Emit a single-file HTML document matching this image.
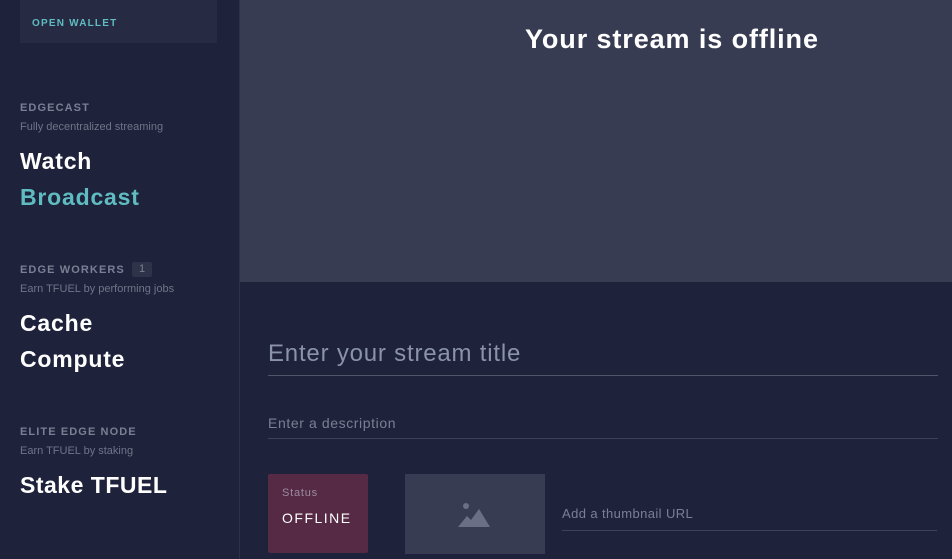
<!DOCTYPE html><html><head><style>
body{margin:0;width:952px;height:559px;overflow:hidden;background:#1e223b;font-family:"Liberation Sans",sans-serif;position:relative}
.a{position:absolute;white-space:nowrap}
.side{position:absolute;left:0;top:0;width:239px;height:559px;background:#1e223b;border-right:1px solid #2c3048}
.lab{font-size:11px;font-weight:bold;letter-spacing:1.1px;color:#7a8093}
.sub{font-size:11px;color:#6f7588}
.big{font-size:23px;font-weight:bold;color:#fff;letter-spacing:0.8px}
</style></head><body>
<div class="side">
<div class="a" style="left:20px;top:0;width:197px;height:43px;background:#262a42"></div>
<div class="a" style="left:32px;top:18px;font-size:10px;font-weight:bold;letter-spacing:1.2px;color:#5fbcc0">OPEN WALLET</div>
<div class="a lab" style="left:20px;top:102px">EDGECAST</div>
<div class="a sub" style="left:20px;top:121px">Fully decentralized streaming</div>
<div class="a big" style="left:20px;top:148px">Watch</div>
<div class="a big" style="left:20px;top:184px;color:#5fbcc0">Broadcast</div>
<div class="a lab" style="left:20px;top:264px">EDGE WORKERS</div>
<div class="a" style="left:132px;top:262px;width:20px;height:15px;background:#2e3349;border-radius:2px;color:#7a8093;font-size:11px;text-align:center;line-height:15px">1</div>
<div class="a sub" style="left:20px;top:283px">Earn TFUEL by performing jobs</div>
<div class="a big" style="left:20px;top:310px">Cache</div>
<div class="a big" style="left:20px;top:346px">Compute</div>
<div class="a lab" style="left:20px;top:426px">ELITE EDGE NODE</div>
<div class="a sub" style="left:20px;top:445px">Earn TFUEL by staking</div>
<div class="a big" style="left:20px;top:472px;letter-spacing:0.5px">Stake TFUEL</div>
</div>
<div class="a" style="left:240px;top:0;width:712px;height:282px;background:#383c53"></div>
<div class="a" style="left:525px;top:24px;font-size:27px;font-weight:bold;color:#fff;letter-spacing:0.9px">Your stream is offline</div>
<div class="a" style="left:268px;top:340px;font-size:24px;color:#8a93a8;letter-spacing:0.8px">Enter your stream title</div>
<div class="a" style="left:268px;top:375px;width:670px;height:1px;background:#50566a"></div>
<div class="a" style="left:268px;top:415px;font-size:14px;color:#7a8093;letter-spacing:0.6px">Enter a description</div>
<div class="a" style="left:268px;top:438px;width:670px;height:1px;background:#3e4358"></div>
<div class="a" style="left:268px;top:474px;width:100px;height:79px;background:#562a45;border-radius:2px"></div>
<div class="a" style="left:282px;top:487px;font-size:11px;color:#9a8ba0;letter-spacing:.8px">Status</div>
<div class="a" style="left:282px;top:510px;font-size:14px;color:#fff;letter-spacing:1.5px">OFFLINE</div>
<div class="a" style="left:405px;top:474px;width:140px;height:80px;background:#383c52"></div>
<svg class="a" style="left:457px;top:502px" width="36" height="26" viewBox="0 0 36 26"><circle cx="9" cy="4" r="3" fill="#6a6f86"/><path d="M1 25 L10 14 L14 18 L22 7 L33 25Z" fill="#6a6f86"/></svg>
<div class="a" style="left:562px;top:506px;font-size:13px;color:#7a8093;letter-spacing:0.4px">Add a thumbnail URL</div>
<div class="a" style="left:562px;top:530px;width:375px;height:1px;background:#3e4358"></div>
</body></html>
